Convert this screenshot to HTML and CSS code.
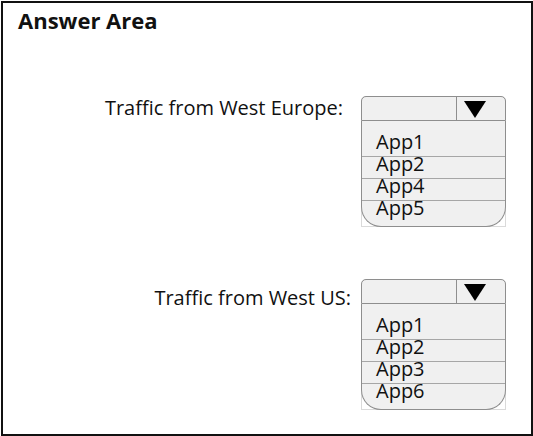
FILE: index.html
```html
<!DOCTYPE html>
<html lang="en">
<head>
<meta charset="utf-8">
<title>Answer Area</title>
<link rel="stylesheet" href="styles.css">
</head>
<body>
<div class="frame">
  <h1 class="title">Answer Area</h1>
  <div class="rows">
    <div class="row row--eu">
      <span class="label">Traffic from West Europe:</span>
      <div class="dd">
        <div class="dd-head">
          <div class="dd-field"></div>
          <div class="dd-btn">
            <svg width="22" height="17" viewBox="0 0 22 17"><polygon points="0,0 22,0 11,17" fill="#000"/></svg>
          </div>
        </div>
        <ul class="dd-list">
          <li>App1</li>
          <li>App2</li>
          <li>App4</li>
          <li>App5</li>
        </ul>
      </div>
    </div>
    <div class="row row--us">
      <span class="label">Traffic from West US:</span>
      <div class="dd">
        <div class="dd-head">
          <div class="dd-field"></div>
          <div class="dd-btn">
            <svg width="22" height="17" viewBox="0 0 22 17"><polygon points="0,0 22,0 11,17" fill="#000"/></svg>
          </div>
        </div>
        <ul class="dd-list">
          <li>App1</li>
          <li>App2</li>
          <li>App3</li>
          <li>App6</li>
        </ul>
      </div>
    </div>
  </div>
</div>
</body>
</html>
```
FILE: styles.css
```css
* { box-sizing: border-box; }
html, body { margin: 0; padding: 0; background: #fff; }
body {
  font-family: "Open Sans", "Noto Sans", sans-serif;
  color: #111;
}
.frame {
  margin: 1px 0 0 1px;
  width: 532px;
  height: 435px;
  border: 2px solid #111;
  padding: 5px 15px;
}
.title {
  margin: 0;
  font-size: 22px;
  font-weight: 700;
  line-height: 24px;
}
.rows {
  margin-top: 64px;
  display: flex;
  flex-direction: column;
  gap: 52px;
}
.row {
  display: flex;
  justify-content: flex-end;
  align-items: flex-start;
  padding-right: 10px;
}
.label {
  font-size: 20px;
  line-height: 24px;
}
.row--eu .label { margin: 0 18px 0 0; }
.row--us .label { margin: 7px 10px 0 0; }
.dd {
  width: 145px;
  border-radius: 5px 5px 0 0;
  box-shadow: inset 0 0 0 1px #dadada;
}
.dd-head {
  display: flex;
  height: 25px;
  border: 1px solid #8e8e8e;
  border-radius: 5px 5px 0 0;
  background: #f0f0f0;
}
.dd-field { flex: 1; }
.dd-btn {
  width: 49px;
  border-left: 1px solid #8e8e8e;
  padding: 4px 0 0 7px;
}
.dd-btn svg { display: block; }
.dd-list {
  list-style: none;
  margin: 0;
  padding: 14px 0 0;
  background: #f0f0f0;
  border: 1px solid #8e8e8e;
  border-top: 0;
  border-radius: 0 0 20px 20px;
}
.dd-list li {
  font-size: 20px;
  line-height: 14px;
  padding: 0 0 7px 14px;
}
.dd-list li + li {
  border-top: 1px solid #a6a6a6;
}
.dd-list li:last-child { padding-bottom: 11px; }
```
